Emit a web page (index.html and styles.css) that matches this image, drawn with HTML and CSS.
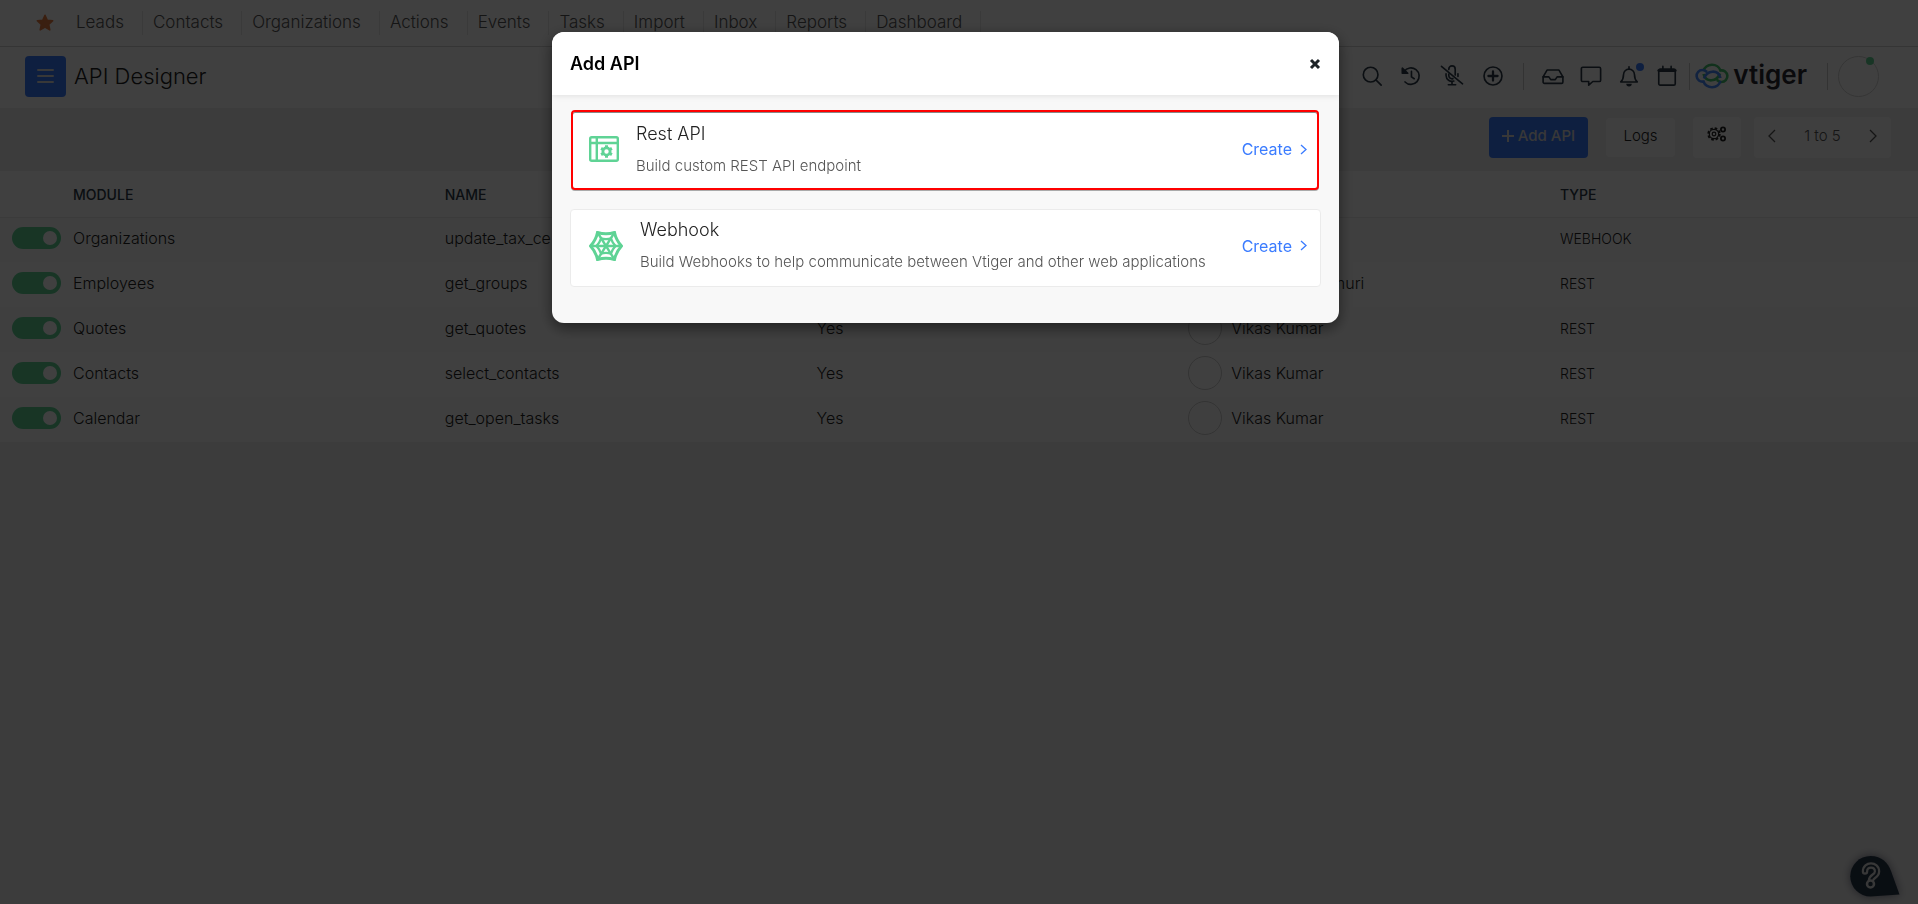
FILE: index.html
```html
<!DOCTYPE html>
<html lang="en">
<head>
    <meta charset="UTF-8">
    <meta name="viewport" content="width=device-width, initial-scale=1.0">
    <title>API Designer</title>
    <link rel="stylesheet" href="styles.css">
</head>
<body>
    <nav class="topnav">
        <svg class="star" viewBox="0 0 18 18"><path d="M9 1.200l2.300 5 5.400.6-4 3.700 1.100 5.400L9 13.200l-4.800 2.700 1.100-5.400-4-3.700 5.400-.6z" fill="#e87c40" stroke="#e87c40" stroke-width="1.500" stroke-linejoin="round"/></svg>
        <a href="#">Leads</a>
        <a href="#">Contacts</a>
        <a href="#">Organizations</a>
        <a href="#">Actions</a>
        <a href="#">Events</a>
        <a href="#">Tasks</a>
        <a href="#">Import</a>
        <a href="#">Inbox</a>
        <a href="#">Reports</a>
        <a href="#">Dashboard</a>
    </nav>

    <header class="header">
        <button class="menu-btn" aria-label="Menu"><span></span><span></span><span></span></button>
        <h1>API Designer</h1>
        <div class="header-icons">
            <div class="icon-group">
                <button class="icon-btn" aria-label="Search">
                    <svg viewBox="0 0 24 24"><circle cx="10.500" cy="10.500" r="8"/><path d="M16.500 16.500L22 22"/></svg>
                </button>
                <button class="icon-btn" aria-label="History">
                    <svg viewBox="0 0 24 24"><path d="M4.500 7a9 9 0 1 1 1 11.500"/><path d="M2.500 3.500v5.500h6z" fill="#2c3b49"/><path d="M12.500 7v6l3 2"/></svg>
                </button>
                <button class="icon-btn wide" aria-label="Microphone off">
                    <svg viewBox="0 0 26 24"><path d="M1.500 1.500l23 19"/><path d="M9.500 5V4.500a3.500 3.500 0 0 1 7 0V11"/><path d="M9.500 10v1.500a3.500 3.500 0 0 0 4.500 3.400"/><path d="M6.500 9.500v2a6.500 6.500 0 0 0 8.500 6"/><path d="M19.500 9.500v3"/><path d="M13 18v3.500M9 21.500h8"/></svg>
                </button>
                <button class="icon-btn" aria-label="Quick create">
                    <svg viewBox="0 0 24 24"><circle cx="12" cy="12" r="9.800"/><path d="M12 7v10M7 12h10" stroke-width="2.500"/></svg>
                </button>
            </div>
            <div class="icon-group compact">
                <button class="icon-btn" aria-label="Inbox">
                    <svg viewBox="0 0 24 24"><path d="M1.200 13L5.500 5.500h13l4.300 7.500v5.500a1.500 1.500 0 0 1-1.500 1.500H2.700a1.500 1.500 0 0 1-1.500-1.500z"/><path d="M1.200 13h6.300l2 3h5l2-3h6.300"/></svg>
                </button>
                <button class="icon-btn" aria-label="Chat">
                    <svg viewBox="0 0 24 24"><path d="M3 2.500h18A1.500 1.500 0 0 1 22.500 4v12.500A1.500 1.500 0 0 1 21 18h-7l-4.500 4V18H3a1.500 1.500 0 0 1-1.500-1.500V4A1.500 1.500 0 0 1 3 2.500z"/></svg>
                </button>
                <button class="icon-btn" aria-label="Notifications">
                    <svg viewBox="0 0 24 24"><path d="M12 4.500a6 6 0 0 1 6 6c0 5 1.500 6.500 3 8H3c1.500-1.500 3-3 3-8a6 6 0 0 1 6-6z"/><path d="M12 2v2.500"/><path d="M9 20.500h6a3 3 0 0 1-6 0z" fill="#2c3b49" stroke="none"/></svg>
                    <i class="badge blue"></i>
                </button>
                <button class="icon-btn" aria-label="Calendar">
                    <svg viewBox="0 0 24 24"><rect x="3" y="4.500" width="18" height="17.500" rx="1.500"/><path d="M3 6h18" stroke-width="3"/><path d="M7.500 1.500v4M16.500 1.500v4"/></svg>
                </button>
            </div>
            <a class="logo" href="#">
                <svg viewBox="0 0 34 28" fill="none" stroke-width="2.600">
                    <path d="M8.500 9a8.800 8 0 0 1 17-.5 5.800 5.800 0 1 1 1 11.500c-2 0-3-.5-4.500-2M25 11.500c-3 8.500-14 9.500-16.500.5" stroke="#46c46f"/>
                    <path d="M25.500 19a8.800 8 0 0 1-17 .5A5.800 5.800 0 1 1 7.500 8c2 0 3 .5 4.500 2M9 16.500C12 8 23 7 25.500 16" stroke="#4a8cff"/>
                </svg>
                <span>vtiger</span>
            </a>
            <button class="profile" aria-label="Profile"><i class="badge green"></i></button>
        </div>
    </header>

    <div class="toolbar">
        <button class="btn primary"><svg viewBox="0 0 12 12"><path d="M6 0v12M0 6h12"/></svg>Add API</button>
        <button class="btn logs">Logs</button>
        <button class="btn settings" aria-label="Settings">
            <svg viewBox="0 0 20 16" fill="none" stroke="#222"><circle cx="7" cy="8" r="5.800" stroke-width="1.800" stroke-dasharray="2.600 1.955"/><circle cx="7" cy="8" r="4.700" stroke-width="1.200"/><circle cx="7" cy="8" r="1.800" stroke-width="1.200"/><circle cx="16" cy="3.500" r="2.100" stroke-width="1.800"/><circle cx="16" cy="12.500" r="2.100" stroke-width="1.800"/></svg>
        </button>
        <div class="pager">
            <button aria-label="Previous"><svg viewBox="0 0 8 14"><path d="M7 1L1 7l6 6"/></svg></button>
            <span>1 to 5</span>
            <button aria-label="Next"><svg viewBox="0 0 8 14"><path d="M1 1l6 6-6 6"/></svg></button>
        </div>
    </div>

    <table class="api-table">
        <thead>
            <tr><th class="toggle-col"></th><th>MODULE</th><th>NAME</th><th></th><th></th><th class="type-col">TYPE</th></tr>
        </thead>
        <tbody>
            <tr>
                <td><input type="checkbox" class="toggle" aria-label="Organizations" checked></td>
                <td>Organizations</td><td>update_tax_ce</td><td>Yes</td>
                <td><div class="owner"><i></i></div></td>
                <td class="type">WEBHOOK</td>
            </tr>
            <tr>
                <td><input type="checkbox" class="toggle" aria-label="Employees" checked></td>
                <td>Employees</td><td>get_groups</td><td>Yes</td>
                <td><div class="owner long"><i></i>muri</div></td>
                <td class="type">REST</td>
            </tr>
            <tr>
                <td><input type="checkbox" class="toggle" aria-label="Quotes" checked></td>
                <td>Quotes</td><td>get_quotes</td><td>Yes</td>
                <td><div class="owner"><i></i>Vikas Kumar</div></td>
                <td class="type">REST</td>
            </tr>
            <tr>
                <td><input type="checkbox" class="toggle" aria-label="Contacts" checked></td>
                <td>Contacts</td><td>select_contacts</td><td>Yes</td>
                <td><div class="owner"><i></i>Vikas Kumar</div></td>
                <td class="type">REST</td>
            </tr>
            <tr>
                <td><input type="checkbox" class="toggle" aria-label="Calendar" checked></td>
                <td>Calendar</td><td>get_open_tasks</td><td>Yes</td>
                <td><div class="owner"><i></i>Vikas Kumar</div></td>
                <td class="type">REST</td>
            </tr>
        </tbody>
    </table>

    <button class="help" aria-label="Help">
        <svg viewBox="0 0 50 42"><path d="M20.500 1C32 1 38 8 41 16l8.500 23.500-29 2A20.200 20.200 0 0 1 20.500 1z" fill="#27384a"/><path d="M15 16.500c0-8 12-8 12 0 0 5-6 4.500-6 9" fill="none" stroke="#ddd" stroke-width="6.500" stroke-linecap="round"/><path d="M15 16.500c0-8 12-8 12 0 0 5-6 4.500-6 9" fill="none" stroke="#27384a" stroke-width="2" stroke-linecap="round"/><circle cx="20.500" cy="29" r="3.500" fill="#27384a" stroke="#ddd" stroke-width="2.500"/></svg>
    </button>

    <div class="backdrop">
        <div class="modal" role="dialog" aria-labelledby="modal-title">
            <div class="modal-header">
                <h2 id="modal-title">Add API</h2>
                <button class="close" aria-label="Close"><svg viewBox="0 0 12 12"><path d="M2 2l8 8M10 2l-8 8"/></svg></button>
            </div>
            <div class="modal-body">
                <div class="card selected">
                    <svg class="rest-icon" viewBox="0 0 30 26" fill="none" stroke="#5fd395" stroke-width="2.400">
                        <rect x="1.200" y="1.200" width="27.600" height="23.600" rx="1.500"/>
                        <path d="M1 7h28"/><path d="M7.800 1v24"/>
                        <circle cx="17.500" cy="15.500" r="3.600" stroke-width="2.800"/>
                        <path d="M17.500 9.300v2.200M17.500 19.500v2.200M12.100 12.400l2 1.100M20.900 17.500l2 1.100M12.100 18.600l2-1.100M20.900 13.500l2-1.100" stroke-width="3"/>
                    </svg>
                    <div class="card-text">
                        <h3>Rest API</h3>
                        <p>Build custom REST API endpoint</p>
                    </div>
                    <a class="create" href="#">Create <svg viewBox="0 0 7 11"><path d="M1 1l5 4.500L1 10"/></svg></a>
                </div>
                <div class="card">
                    <svg class="hook-icon" viewBox="0 0 34 30" fill="none" stroke="#5fd395" stroke-width="2.400">
                        <path d="M8.500 1.500Q17 4 25.500 1.500 27 9 32.500 15 27 21 25.500 28.500 17 26 8.500 28.500 7 21 1.500 15 7 9 8.500 1.500z" stroke-width="3"/>
                        <path d="M12 7.500q5 1.200 10 0 1.200 4 4.500 7.500-3.300 3.500-4.500 7.500-5-1.200-10 0-1.200-4-4.500-7.500 3.300-3.500 4.500-7.500z"/>
                        <path d="M8.500 1.500l17 27M25.500 1.500l-17 27M1.500 15h31"/>
                    </svg>
                    <div class="card-text">
                        <h3>Webhook</h3>
                        <p>Build Webhooks to help communicate between Vtiger and other web applications</p>
                    </div>
                    <a class="create" href="#">Create <svg viewBox="0 0 7 11"><path d="M1 1l5 4.500L1 10"/></svg></a>
                </div>
            </div>
        </div>
    </div>
</body>
</html>
```

FILE: styles.css
```css
* {
    margin: 0;
    padding: 0;
    box-sizing: border-box;
}
body {
    min-height: 100vh;
    background-color: #f0f0f0;
    color: #222;
    font-family: Inter, "Open Sans", sans-serif;
    font-size: 15px;
    font-weight: 300;
}
button {
    background: none;
    border: none;
    font: inherit;
    color: inherit;
    cursor: pointer;
}
a {
    color: inherit;
    text-decoration: none;
}

/* top menu */
.topnav {
    display: flex;
    align-items: center;
    height: 47px;
    padding-left: 36px;
    background-color: #fdfdfd;
    border-bottom: 1px solid #d4d4d4;
    color: #555;
    font-size: 17px;
}
.star {
    width: 18px;
    height: 18px;
    margin-right: 12px;
}
.topnav a {
    height: 24px;
    line-height: 22px;
    padding: 0 18px 0 10px;
    border-right: 1px solid #e8e8e8;
}

/* header */
.header {
    display: flex;
    align-items: center;
    height: 61px;
    padding: 0 39px 3px 25px;
    background-color: #fff;
}
.menu-btn {
    display: flex;
    flex-direction: column;
    justify-content: center;
    align-items: center;
    gap: 4px;
    width: 41px;
    height: 41px;
    border-radius: 4px;
    background-color: #3b7cff;
}
.menu-btn span {
    width: 17px;
    height: 2px;
    border-radius: 1px;
    background-color: #ddd;
}
.header h1 {
    margin-left: 8px;
    font-size: 22px;
    font-weight: 300;
}
.header-icons {
    display: flex;
    align-items: center;
    margin-left: auto;
}
.icon-group {
    display: flex;
    align-items: center;
    gap: 17px;
    height: 27px;
    padding-right: 19px;
    border-right: 1px solid #ccc;
}
.icon-group.compact {
    gap: 16px;
    padding: 0 11px 0 18px;
}
.icon-btn {
    position: relative;
    width: 22px;
    height: 22px;
}
.icon-btn.wide {
    width: 26px;
}
.icon-btn svg {
    display: block;
    width: 100%;
    height: 100%;
    fill: none;
    stroke: #2c3b49;
    stroke-width: 1.8;
    stroke-linecap: round;
    stroke-linejoin: round;
}
.badge {
    position: absolute;
    width: 8px;
    height: 8px;
    border-radius: 50%;
}
.badge.blue {
    top: -2px;
    right: -4px;
    background-color: #3b7cff;
}
.badge.green {
    top: 0;
    right: 4px;
    background-color: #5fd395;
}
.logo {
    display: flex;
    align-items: center;
    gap: 4px;
    height: 27px;
    margin-right: 10px;
    padding: 0 20px 0 5px;
    border-right: 1px solid #ccc;
    font-size: 26px;
    font-weight: 600;
    color: #2b2b33;
}
.logo svg {
    width: 34px;
    height: 28px;
}
.logo span {
    padding-bottom: 4px;
}
.profile {
    position: relative;
    width: 41px;
    height: 41px;
    border: 1px solid #d4d4d4;
    border-radius: 50%;
}

/* buttons over the table */
.toolbar {
    display: flex;
    justify-content: flex-end;
    align-items: center;
    height: 63px;
    padding: 0 27px 4px 0;
}
.btn {
    height: 41px;
    padding-bottom: 4px;
    border-radius: 4px;
    background-color: #fbfbfb;
}
.btn.primary {
    display: flex;
    align-items: center;
    justify-content: center;
    gap: 4px;
    width: 99px;
    margin-right: 18px;
    background-color: #3b7cff;
    color: #ddd;
    font-weight: 500;
}
.btn.primary svg {
    width: 12px;
    height: 12px;
    stroke: #ddd;
    stroke-width: 2;
}
.btn.logs {
    width: 69px;
    height: 39px;
    margin-right: 18px;
}
.btn.settings {
    width: 48px;
    margin-right: 13px;
}
.btn.settings svg {
    width: 20px;
    height: 16px;
}
.pager {
    display: flex;
    align-items: center;
    justify-content: space-between;
    width: 137px;
    height: 41px;
    padding: 0 14px 4px;
    border-radius: 4px;
    background-color: #fbfbfb;
    color: #555;
}
.pager svg {
    display: block;
    width: 8px;
    height: 14px;
    fill: none;
    stroke: #555;
    stroke-width: 1.3;
}

/* list of apis */
.api-table {
    width: 100%;
    table-layout: fixed;
    border-collapse: collapse;
    background-color: #fff;
    font-size: 16px;
}
.api-table th {
    height: 46px;
    padding-top: 2px;
    text-align: left;
    font-weight: 500;
    font-size: 14px;
    color: #2c3b49;
    border-bottom: 1px solid #ececec;
}
.api-table td {
    height: 45px;
    padding-bottom: 3px;
}
.api-table tbody tr:nth-child(odd) {
    background-color: #fcfcfc;
}
.api-table .toggle-col {
    width: 73px;
}
.api-table .type-col {
    width: 358px;
}
.api-table .type {
    font-size: 14px;
}
.toggle {
    appearance: none;
    display: block;
    width: 49px;
    height: 22px;
    margin-left: 12px;
    padding: 4px;
    border-radius: 11px;
    background-color: #5fd395;
}
.toggle::before {
    content: "";
    display: block;
    width: 14px;
    height: 14px;
    margin-left: auto;
    border-radius: 50%;
    background-color: #fff;
}
.owner {
    display: flex;
    align-items: center;
    gap: 9px;
}
.owner i {
    width: 34px;
    height: 34px;
    border: 1px solid #ccc;
    border-radius: 50%;
}
.owner.long {
    gap: 109px;
}

/* help bubble */
.help {
    position: fixed;
    right: 18px;
    bottom: 7px;
    width: 50px;
    height: 42px;
    filter: drop-shadow(0 0 5px #778);
}

/* modal */
.backdrop {
    position: fixed;
    inset: 0;
    display: flex;
    justify-content: center;
    align-items: flex-start;
    padding: 32px 27px 0 0;
    background-color: rgba(0, 0, 0, 0.75);
}
.modal {
    width: 787px;
    border-radius: 12px;
    background-color: #f8f8f8;
    box-shadow: 0 5px 15px rgba(0, 0, 0, 0.5);
    overflow: hidden;
}
.modal-header {
    display: flex;
    align-items: center;
    justify-content: space-between;
    height: 63px;
    padding: 0 18px;
    background-color: #fff;
    box-shadow: 0 1px 6px rgba(0, 0, 0, 0.1);
}
.modal-header h2 {
    font-size: 18px;
    font-weight: 600;
    color: #000;
}
.close svg {
    display: block;
    width: 12px;
    height: 12px;
    stroke: #1d2327;
    stroke-width: 3;
}
.modal-body {
    display: flex;
    flex-direction: column;
    gap: 19px;
    padding: 15px 18px 36px;
}
.card {
    display: flex;
    align-items: center;
    height: 78px;
    padding: 0 13px 5px 18px;
    border: 1px solid #ebebeb;
    border-radius: 4px;
    background-color: #fff;
}
.card.selected {
    height: 80px;
    margin: 0 2px 0 1px;
    padding: 0 10px 2px 16px;
    border: 2px solid #f00;
    box-shadow: inset 0 1px #888, 0 1px #aaa;
}
.rest-icon {
    width: 30px;
    height: 26px;
    margin-right: 17px;
}
.hook-icon {
    width: 34px;
    height: 30px;
    margin-right: 17px;
}
.card h3 {
    margin-bottom: 9px;
    font-size: 18px;
    font-weight: 300;
    line-height: 24px;
}
.card p {
    color: #555;
    line-height: 22px;
}
.create {
    display: flex;
    align-items: center;
    gap: 8px;
    margin-left: auto;
    color: #3b7cff;
    font-size: 16px;
    font-weight: 400;
}
.create svg {
    width: 7px;
    height: 11px;
    fill: none;
    stroke: #3b7cff;
    stroke-width: 1.3;
}
```
